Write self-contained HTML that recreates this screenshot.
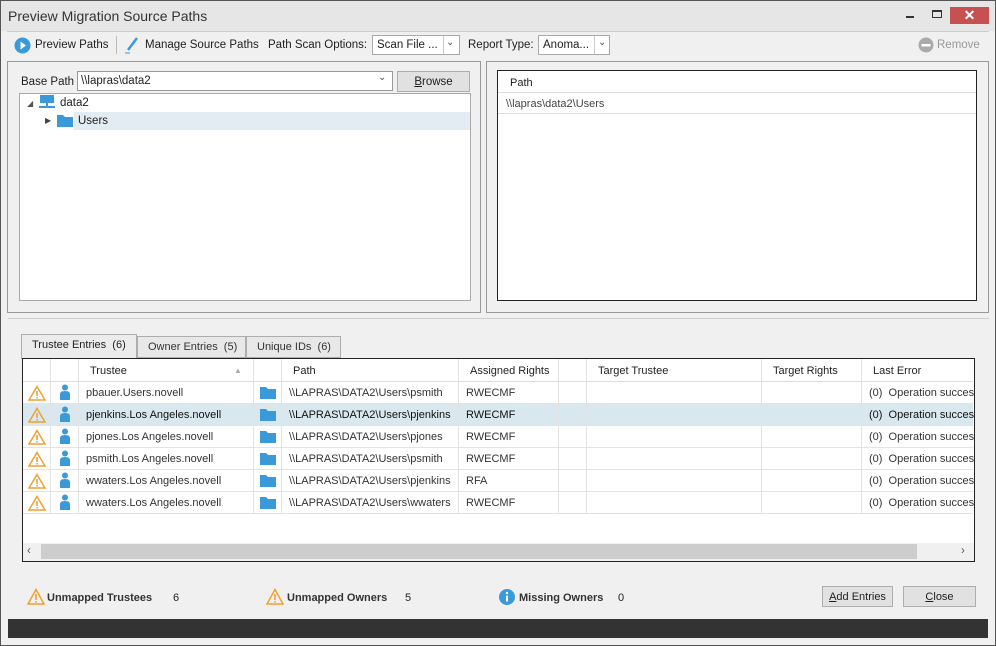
<!DOCTYPE html>
<html><head><style>
*{box-sizing:border-box;margin:0;padding:0}
body{width:996px;height:646px;background:#f0f0f0;font-family:"Liberation Sans",sans-serif;font-size:11.5px;color:#1e1e1e;position:relative;overflow:hidden}
.a{position:absolute}
.win{left:0;top:0;width:996px;height:646px;border:1px solid #555;background:#f0f0f0}
.title{left:1px;top:1px;width:994px;height:30px;background:#e6e6e6}
.btn{border:1px solid #adadad;background:#e1e1e1;text-align:center;line-height:19px}
.cell{position:absolute;top:0;height:100%;border-right:1px solid #e3e3e3;padding-left:7px;white-space:nowrap;overflow:hidden}
.row{position:absolute;left:0;width:950px;height:22px;border-bottom:1px solid #e3e3e3;line-height:23px;color:#333;font-size:11px}
.hdr{position:absolute;left:0;top:0;width:950px;height:23px;border-bottom:1px solid #ddd;line-height:24px;color:#222;font-size:11px}
.tab{position:absolute;top:336px;height:22px;border:1px solid #adadad;background:#e8e8e8;line-height:21px;padding-left:10px;color:#333;font-size:11px}
</style></head><body>
<div class="a win"></div>
<div class="a title"></div>
<div class="a" style="left:8px;top:8px;font-size:14px;color:#333">Preview Migration Source Paths</div>
<div class="a" style="left:906px;top:16px;width:8px;height:2px;background:#333"></div>
<div class="a" style="left:932px;top:10px;width:10px;height:8px;border:1px solid #333;border-top-width:2px"></div>
<div class="a" style="left:950px;top:7px;width:39px;height:17px;background:#c75050;color:#fff;text-align:center;font-size:14px;line-height:17px;font-weight:bold">✕</div>
<div class="a" style="left:7px;top:31px;width:982px;height:1px;background:#ccc"></div>
<!-- toolbar -->
<svg class="a" style="left:14px;top:37px" width="17" height="17"><circle cx="8.5" cy="8.5" r="8" fill="#3a9ad9"/><path d="M6.5 4.5L12 8.5 6.5 12.5Z" fill="#fff"/></svg>
<div class="a" style="left:35px;top:39px;font-size:11.5px">Preview Paths</div>
<div class="a" style="left:116px;top:36px;width:1px;height:18px;background:#bbb"></div>
<svg class="a" style="left:124px;top:36px" width="16" height="18"><path d="M4 14L13 2" stroke="#3a9ad9" stroke-width="2.5"/><path d="M1 17h5" stroke="#3a9ad9" stroke-width="1"/></svg>
<div class="a" style="left:145px;top:39px;font-size:11.5px">Manage Source Paths</div>
<div class="a" style="left:268px;top:39px;font-size:11.5px">Path Scan Options:</div>
<div class="a" style="left:372px;top:35px;width:88px;height:20px;border:1px solid #aaa;background:#fff;padding:3px 4px">Scan File ...</div>
<div class="a" style="left:443px;top:36px;width:1px;height:18px;background:#ccc"></div>
<div class="a" style="left:446px;top:37px;font-size:10px;color:#555">⌄</div>
<div class="a" style="left:468px;top:39px;font-size:11.5px">Report Type:</div>
<div class="a" style="left:538px;top:35px;width:72px;height:20px;border:1px solid #aaa;background:#fff;padding:3px 4px">Anoma...</div>
<div class="a" style="left:594px;top:36px;width:1px;height:18px;background:#ccc"></div>
<div class="a" style="left:598px;top:37px;font-size:10px;color:#555">⌄</div>
<svg class="a" style="left:918px;top:37px" width="16" height="16"><circle cx="8" cy="8" r="7.5" fill="#aaa"/><rect x="3.5" y="7" width="9" height="2.5" fill="#fff"/></svg>
<div class="a" style="left:937px;top:39px;font-size:11.5px;color:#999">Remove</div>
<!-- left panel -->
<div class="a" style="left:7px;top:61px;width:474px;height:252px;border:1px solid #999"></div>
<div class="a" style="left:21px;top:76px">Base Path</div>
<div class="a" style="left:77px;top:71px;width:316px;height:20px;border:1px solid #999;background:#fff;padding:3px 3px">\\lapras\data2</div>
<div class="a" style="left:378px;top:72px;font-size:10px;color:#555">⌄</div>
<div class="a btn" style="left:397px;top:71px;width:73px;height:21px;line-height:20px"><u>B</u>rowse</div>
<div class="a" style="left:19px;top:93px;width:452px;height:208px;border:1px solid #aaa;background:#fff"></div>
<div class="a" style="left:27px;top:99px;font-size:8px;color:#555">◢</div>
<svg class="a" style="left:39px;top:95px" width="17" height="14"><rect x="1" y="0" width="14" height="8" fill="#3a9ad9"/><rect x="7" y="8" width="2" height="3" fill="#3a9ad9"/><rect x="0" y="11" width="16" height="2" fill="#3a9ad9"/></svg>
<div class="a" style="left:60px;top:97px">data2</div>
<div class="a" style="left:74px;top:112px;width:396px;height:18px;background:#e3ebf3"></div>
<div class="a" style="left:45px;top:116px;font-size:8px;color:#444">▶</div>
<svg class="a" style="left:57px;top:114px" width="16" height="13"><path d="M0 1h6l2 2h8v10H0Z" fill="#3a9ad9"/></svg>
<div class="a" style="left:78px;top:115px">Users</div>
<!-- right panel -->
<div class="a" style="left:486px;top:61px;width:503px;height:252px;border:1px solid #999"></div>
<div class="a" style="left:497px;top:70px;width:480px;height:231px;border:1px solid #222;background:#fff"></div>
<div class="a" style="left:498px;top:71px;width:478px;height:22px;border-bottom:1px solid #ddd;padding:6px 12px;font-size:11px">Path</div>
<div class="a" style="left:498px;top:93px;width:478px;height:21px;border-bottom:1px solid #ddd;padding:5px 8px;color:#444;font-size:11px">\\lapras\data2\Users</div>
<!-- tabs -->
<div class="a" style="left:8px;top:318px;width:981px;height:1px;background:#ccc"></div>
<div class="tab" style="left:21px;width:116px;top:334px;height:25px;background:#ececec;color:#222">Trustee Entries&nbsp; (6)</div>
<div class="tab" style="left:137px;width:109px">Owner Entries&nbsp; (5)</div>
<div class="tab" style="left:246px;width:95px">Unique IDs&nbsp; (6)</div>
<!-- grid -->
<div class="a" style="left:22px;top:358px;width:953px;height:204px;border:1px solid #222;background:#fff;overflow:hidden">
<div style="position:absolute;left:0;top:0;width:951px;height:185px">
<div class="hdr">
<div class="cell" style="left:0;width:28px"></div><div class="cell" style="left:28px;width:28px"></div>
<div class="cell" style="left:56px;width:175px;padding-left:11px">Trustee<span style="position:absolute;left:155px;color:#aaa;font-size:8px">▲</span></div>
<div class="cell" style="left:231px;width:28px"></div>
<div class="cell" style="left:259px;width:177px;padding-left:11px">Path</div>
<div class="cell" style="left:436px;width:100px;padding-left:11px">Assigned Rights</div>
<div class="cell" style="left:536px;width:28px"></div>
<div class="cell" style="left:564px;width:175px;padding-left:11px">Target Trustee</div>
<div class="cell" style="left:739px;width:100px;padding-left:11px">Target Rights</div>
<div class="cell" style="left:839px;width:120px;padding-left:11px;border:0">Last Error</div>
</div>
</div>
</div>
<div id="rows" class="a" style="left:23px;top:382px;width:951px;height:132px;overflow:hidden"></div>
<script>
var d=[["pbauer.Users.novell","psmith","RWECMF"],["pjenkins.Los Angeles.novell","pjenkins","RWECMF"],["pjones.Los Angeles.novell","pjones","RWECMF"],["psmith.Los Angeles.novell","psmith","RWECMF"],["wwaters.Los Angeles.novell","pjenkins","RFA"],["wwaters.Los Angeles.novell","wwaters","RWECMF"]];
var h="";d.forEach(function(r,i){h+='<div class="row" style="top:'+(i*22)+'px;'+(i==1?'background:#d9e8ef;color:#111':'')+'">'+
'<div class="cell" style="left:0;width:28px;padding-left:5px"><svg width="18" height="16" style="margin-top:3px"><path d="M9 1.5L17 15H1Z" fill="none" stroke="#f0a030" stroke-width="1.5"/><rect x="8.2" y="6" width="1.6" height="5" fill="#f0a030"/><rect x="8.2" y="12" width="1.6" height="1.5" fill="#f0a030"/></svg></div>'+
'<div class="cell" style="left:28px;width:28px;padding-left:9px"><svg width="10" height="17" style="margin-top:2px"><circle cx="5" cy="3.5" r="3" fill="#3a9ad9"/><path d="M0 16V10Q0 7 5 7Q10 7 10 10V16Z" fill="#3a9ad9"/></svg></div>'+
'<div class="cell" style="left:56px;width:175px">'+r[0]+'</div>'+
'<div class="cell" style="left:231px;width:28px;padding-left:6px"><svg width="16" height="12" style="margin-top:5px"><path d="M0 0h6l2 2h8v10H0Z" fill="#3a9ad9"/></svg></div>'+
'<div class="cell" style="left:259px;width:177px">\\\\LAPRAS\\DATA2\\Users\\'+r[1]+'</div>'+
'<div class="cell" style="left:436px;width:100px">'+r[2]+'</div>'+
'<div class="cell" style="left:536px;width:28px"></div><div class="cell" style="left:564px;width:175px"></div><div class="cell" style="left:739px;width:100px"></div>'+
'<div class="cell" style="left:839px;width:120px;border:0">(0)&nbsp; Operation succes</div></div>';});
document.getElementById("rows").innerHTML=h;
</script>
<div class="a" style="left:23px;top:543px;width:951px;height:18px;background:#f0f0f0"></div>
<div class="a" style="left:41px;top:544px;width:876px;height:15px;background:#cdcdcd"></div>
<div class="a" style="left:27px;top:545px;color:#555">‹</div>
<div class="a" style="left:961px;top:545px;color:#555">›</div>
<!-- status -->
<svg class="a" style="left:27px;top:588px" width="18" height="17"><path d="M9 1.5L17 16H1Z" fill="none" stroke="#f0a030" stroke-width="1.5"/><rect x="8.2" y="6" width="1.6" height="6" fill="#f0a030"/><rect x="8.2" y="13" width="1.6" height="1.5" fill="#f0a030"/></svg>
<div class="a" style="left:47px;top:592px;font-weight:bold;color:#333;font-size:11px">Unmapped Trustees</div>
<div class="a" style="left:173px;top:592px;font-size:11px">6</div>
<svg class="a" style="left:266px;top:588px" width="18" height="17"><path d="M9 1.5L17 16H1Z" fill="none" stroke="#f0a030" stroke-width="1.5"/><rect x="8.2" y="6" width="1.6" height="6" fill="#f0a030"/><rect x="8.2" y="13" width="1.6" height="1.5" fill="#f0a030"/></svg>
<div class="a" style="left:287px;top:592px;font-weight:bold;color:#333;font-size:11px">Unmapped Owners</div>
<div class="a" style="left:405px;top:592px;font-size:11px">5</div>
<svg class="a" style="left:498px;top:588px" width="18" height="18"><circle cx="9" cy="9" r="8" fill="#3a9ad9"/><rect x="8" y="7.5" width="2" height="6" fill="#fff"/><circle cx="9" cy="5" r="1.2" fill="#fff"/></svg>
<div class="a" style="left:519px;top:592px;font-weight:bold;color:#333;font-size:11px">Missing Owners</div>
<div class="a" style="left:618px;top:592px;font-size:11px">0</div>
<div class="a btn" style="left:822px;top:586px;width:71px;height:21px;line-height:20px;font-size:11px"><u>A</u>dd Entries</div>
<div class="a btn" style="left:903px;top:586px;width:73px;height:21px;line-height:20px;font-size:11px"><u>C</u>lose</div>
<div class="a" style="left:8px;top:619px;width:980px;height:19px;background:#333"></div>
</body></html>
